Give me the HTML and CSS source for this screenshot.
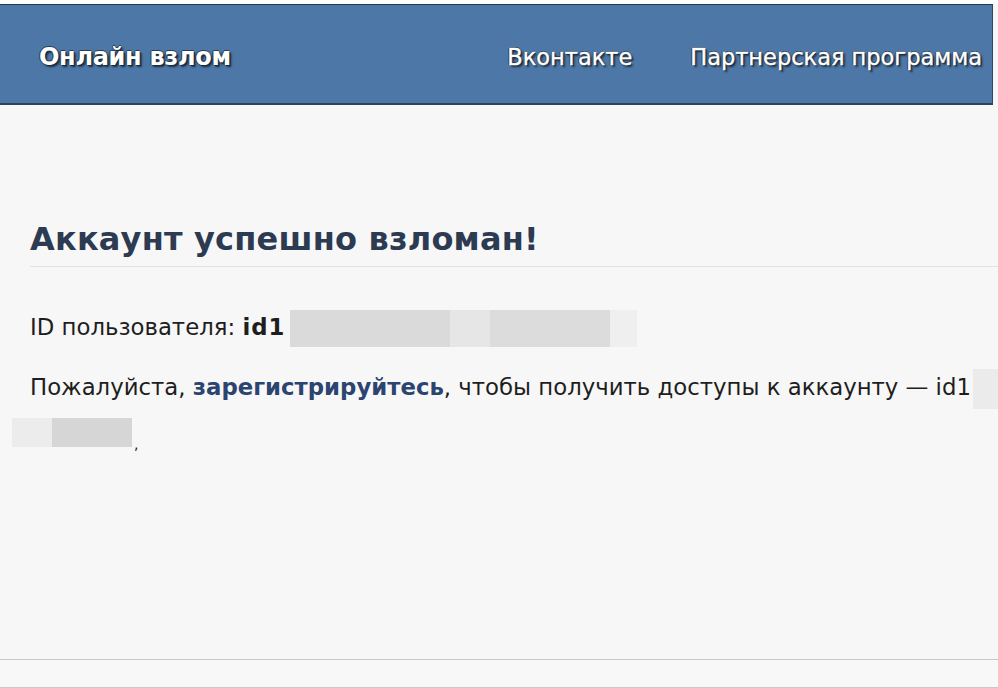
FILE: index.html
```html
<!DOCTYPE html>
<html lang="ru">
<head>
<meta charset="utf-8">
<title>Онлайн взлом</title>
<link rel="stylesheet" href="styles.css">
</head>
<body>
<div class="page">
  <div class="topstrip"></div>
  <header class="header">
    <div class="logo">Онлайн взлом</div>
    <nav class="nav">
      <a class="nav-link" href="#">Вконтакте</a>
      <a class="nav-link" href="#">Партнерская программа</a>
    </nav>
  </header>
  <main class="main">
    <h1 class="title">Аккаунт успешно взломан!</h1>
    <p class="row row-id">ID пользователя: <b class="strong">id1</b><span class="blur"><span class="bk bk-a"></span><span class="bk bk-b"></span><span class="bk bk-c"></span><span class="bk bk-d"></span></span></p>
    <p class="row row-msg">Пожалуйста, <a class="reg" href="#">зарегистрируйтесь</a>, чтобы получить доступы к аккаунту — id1<span class="bk bk-e"></span></p>
    <div class="row2"><span class="bk bk-f"></span><span class="bk bk-g"></span><span class="comma">,</span></div>
  </main>
  <footer class="footer"></footer>
</div>
</body>
</html>
```
FILE: styles.css
```css
html, body {
  margin: 0;
  padding: 0;
  background: #f7f7f7;
  font-family: "DejaVu Sans", Verdana, sans-serif;
}
.page {
  width: 998px;
  height: 688px;
  overflow: hidden;
  display: flex;
  flex-direction: column;
}
.topstrip {
  height: 4px;
  background: #ffffff;
}
.header {
  box-sizing: border-box;
  width: 993px;
  height: 101px;
  background: #4c77a7;
  border-top: 1px solid #24384f;
  border-bottom: 2px solid #2a4360;
  border-right: 1px solid #2d4868;
  display: flex;
  align-items: center;
  justify-content: space-between;
  padding: 5px 10px 0 39px;
}
.logo {
  color: #ffffff;
  font-weight: bold;
  font-size: 24px;
  letter-spacing: -0.3px;
  text-shadow: 1px 1px 0 #1d2c3d, -1px 0 0 #2a3d52, 0 -1px 0 #2a3d52, 2px 2px 2px #1d2c3d;
}
.nav {
  display: flex;
  gap: 58px;
}
.nav-link {
  color: #ffffff;
  text-decoration: none;
  font-size: 22.5px;
  letter-spacing: 0;
  -webkit-text-stroke: 0.4px #ffffff;
  text-shadow: 1px 1px 0 #1d2c3d, -1px 0 0 #2a3d52, 0 -1px 0 #2a3d52, 2px 2px 2px #1d2c3d;
}
.main {
  flex: 1;
  padding: 114px 0 0 30px;
}
.title {
  margin: 0;
  font-size: 32px;
  font-weight: bold;
  color: #2c3a52;
  letter-spacing: 0.2px;
  padding-bottom: 7px;
  border-bottom: 1px solid #e2e2e2;
  line-height: 40px;
}
.row {
  margin: 0;
  font-size: 22.8px;
  color: #1e1e1e;
  line-height: 40px;
  height: 40px;
  white-space: nowrap;
}
.row-id {
  margin-top: 40px;
}
.row-msg {
  margin-top: 20px;
}
.strong {
  font-weight: bold;
  letter-spacing: 1px;
}
.reg {
  color: #2b4470;
  font-weight: bold;
  text-decoration: none;
}
.blur {
  display: inline-block;
  vertical-align: middle;
  margin-left: 5px;
  font-size: 0;
  line-height: 0;
}
.bk {
  display: inline-block;
  vertical-align: middle;
  height: 37px;
}
.bk-a { width: 160px; background: #dadada; }
.bk-b { width: 40px; background: #e6e6e6; }
.bk-c { width: 120px; background: #dcdcdc; }
.bk-d { width: 27px; background: #efefef; }
.bk-e { width: 26px; height: 40px; background: #ebebeb; margin-left: 2px; }
.row2 {
  display: flex;
  align-items: flex-start;
  margin-left: -18px;
  margin-top: 11px;
  height: 40px;
}
.bk-f { width: 40px; height: 29px; background: #ececec; }
.bk-g { width: 80px; height: 29px; background: #d6d6d6; }
.comma { font-size: 14px; margin-top: 18px; margin-left: 2px; color: #222; }
.footer {
  height: 29px;
  border-top: 1px solid #c9c9c9;
  border-bottom: 1px solid #c9c9c9;
  box-sizing: border-box;
  background: #f8f8f8;
}
```
